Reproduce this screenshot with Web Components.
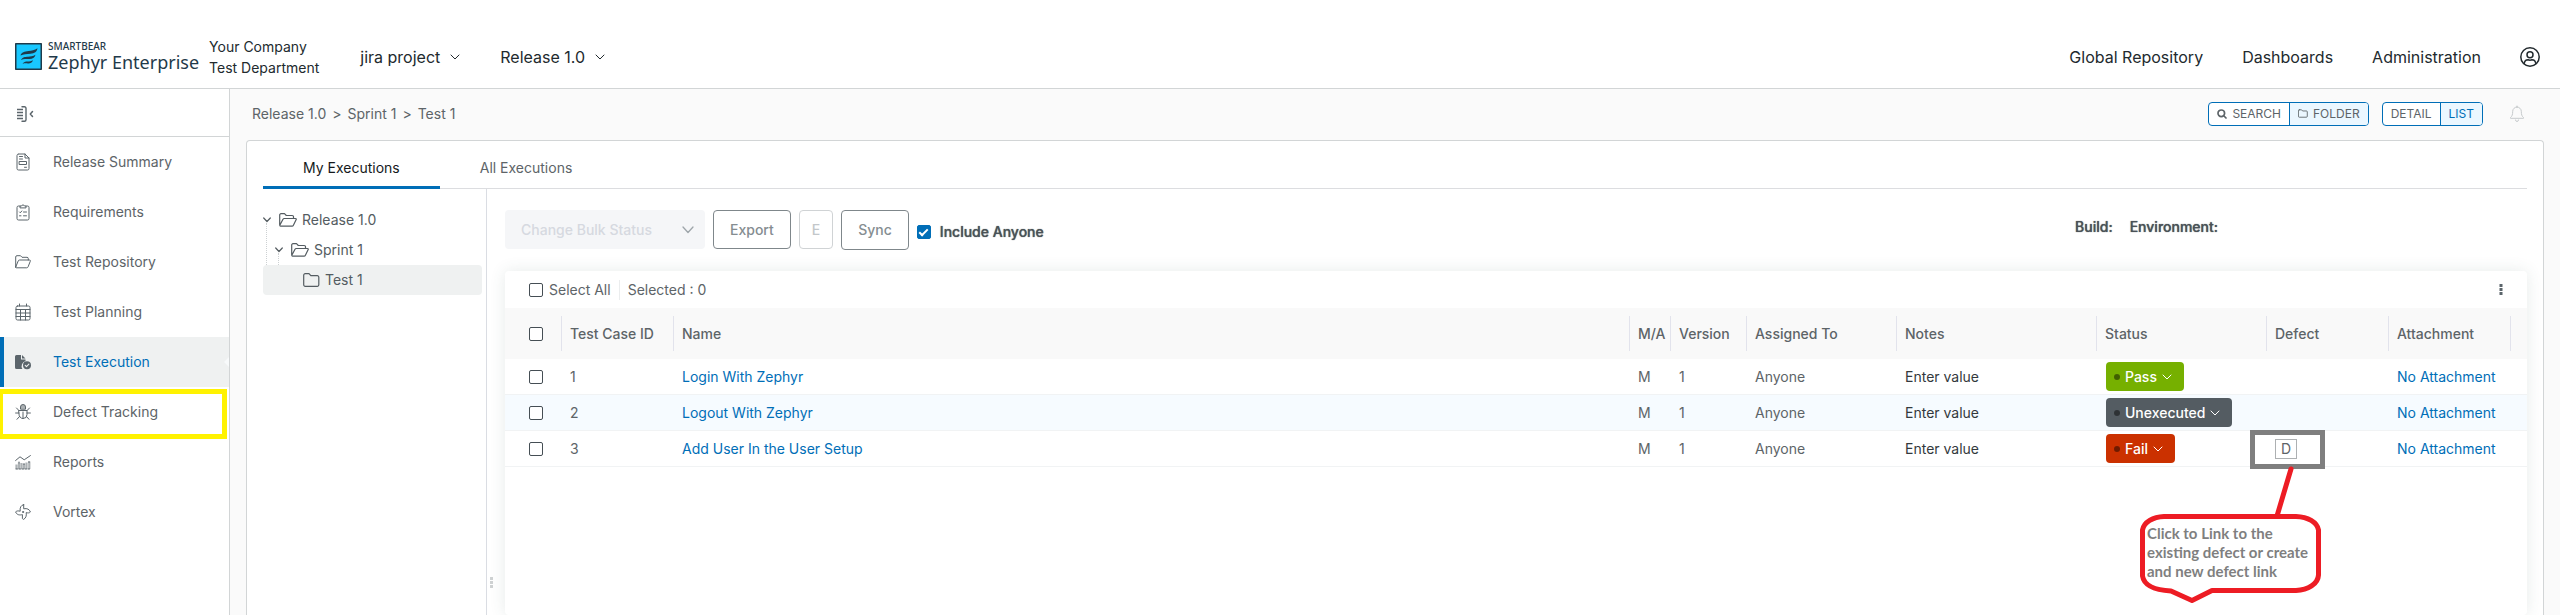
<!DOCTYPE html>
<html lang="en">
<head>
<meta charset="utf-8">
<meta name="viewport" content="width=device-width, initial-scale=1">
<title>Zephyr Enterprise – Test Execution</title>
<style>
  html, body { margin: 0; }
  body {
    font: 14px/20px Inter, "Liberation Sans", sans-serif;
    color: #5d6468;
    background: #fff;
    --blue: #006eb7;
    --line: #d2d5d6;
    --ink: #222a2e;
    --icon: #5b656b;
  }
</style>
</head>
<body>
<zephyr-app></zephyr-app>

<script>
const base = `
  *, *::before, *::after { box-sizing: border-box; }
  a { color: inherit; text-decoration: none; }
  button, select { font: inherit; color: inherit; margin: 0; cursor: pointer; }
  svg { display: block; flex: none; fill: none; stroke: currentColor; stroke-linecap: round; stroke-linejoin: round; }
  input[type=checkbox] {
    appearance: none; display: block; flex: none; width: 14px; height: 14px; margin: 0;
    border: 1px solid #454e54; border-radius: 2px; background: #fff;
  }
  input[type=checkbox]:checked { background: var(--blue); border-color: var(--blue); display: grid; place-items: center; }
  input[type=checkbox]:checked::after {
    content: ""; width: 9px; height: 5px; border: solid #fff; border-width: 0 0 2px 2px;
    transform: translateY(-1px) rotate(-45deg);
  }
`;

function define(name, html, setup) {
  const tpl = document.createElement('template');
  tpl.innerHTML = html.replace('<style>', '<style>' + base);
  customElements.define(name, class extends HTMLElement {
    connectedCallback() {
      if (this.shadowRoot) return;
      this.attachShadow({ mode: 'open' }).append(tpl.content.cloneNode(true));
      if (setup) setup(this, this.shadowRoot);
    }
  });
}

const icons = {
  summary: `<svg width="16" height="18" viewBox="0 0 16 18"><path d="M4 1h6l4 4v10.500a1.500 1.500 0 0 1-1.500 1.500h-9A1.500 1.500 0 0 1 2 15.500v-13A1.500 1.500 0 0 1 3.500 1zM10 1v4h4M4.500 3.500h3M4.500 6h3M4.500 8.500h7v3h-7zM9.500 14.300h2"/></svg>`,
  requirements: `<svg width="16" height="18" viewBox="0 0 16 18"><path d="M5 3H3.500A1.500 1.500 0 0 0 2 4.500v11A1.500 1.500 0 0 0 3.500 17h9a1.500 1.500 0 0 0 1.500-1.500v-11A1.500 1.500 0 0 0 12.500 3H11M5 4.500V3h1.500a1.600 1.600 0 0 1 3 0H11v1.500zM4.500 9l.8.8L6.800 8M8.500 9h3M4.500 12.800h1.500M8.500 12.800h3"/></svg>`,
  repository: `<svg width="16" height="14" viewBox="0 0 16 14"><path d="M.7 12V2A1.300 1.300 0 0 1 2 .7h3.500L7 2.300h5A1.300 1.300 0 0 1 13.300 3.600V5M.7 12l2.500-6A1.500 1.500 0 0 1 4.600 5h9.900a.9.900 0 0 1 .8 1.200l-2.200 5.600a1.500 1.500 0 0 1-1.400 1H1.500A.8.8 0 0 1 .7 12z"/></svg>`,
  planning: `<svg width="16" height="18" viewBox="0 0 16 18"><path d="M2.500 3h11A1.500 1.500 0 0 1 15 4.500v11a1.500 1.500 0 0 1-1.500 1.500h-11A1.500 1.500 0 0 1 1 15.500v-11A1.500 1.500 0 0 1 2.500 3zM4.500 1v2M11.500 1v2M1 6.500h14M1 10h14M1 13.500h14M5.500 6.500V17M10.500 6.500V17"/></svg>`,
  execution: `<svg width="16" height="16" viewBox="0 0 16 16" style="fill:currentColor;stroke:none"><path d="M1.500 1H6v4.500h4.500v1.600A5.300 5.300 0 0 0 7.400 15H1.500A1.500 1.500 0 0 1 0 13.500v-11A1.500 1.500 0 0 1 1.500 1zM7 1l3.500 3.500H7z"/><circle cx="12" cy="11.300" r="4"/><path d="M10.200 11.300l1.300 1.300 2.400-2.400" style="fill:none;stroke:#eff1f1;stroke-width:1.100"/></svg>`,
  defect: `<svg width="16" height="16" viewBox="0 0 16 16"><path d="M4 6.500h8v4a4 4 0 0 1-8 0zM8 8v6.500M4 9H.6M12 9h3.400M4.200 6.800L1.500 4M11.800 6.800L14.500 4M4.500 12.500L2 15.300M11.500 12.500l2.500 2.800"/><path d="M5.500 4.800V3a2.500 2.500 0 0 1 5 0v1.800z" style="fill:currentColor;fill-opacity:.5"/></svg>`,
  reports: `<svg width="16" height="15" viewBox="0 0 16 15"><path d="M.6 5.500L5 1.800l4.200 3L15.400.6"/><path d="M1.500 14V9.500M4 14V7.500M6.500 14V8M9 14V9M11.500 14V7.500M14.300 14V6.500" style="stroke-width:2.200;stroke-opacity:.5;stroke-linecap:butt"/><path d="M1 14h14M4 7v1M9 8.500v1M14 6.500v1" style="stroke-dasharray:1.500 1.500"/></svg>`,
  vortex: `<svg width="16" height="16" viewBox="0 0 16 16"><path d="M8.700.6v4.200c3.500-.8 5.800.6 6.700 3.200-1.200 1.200-2.400 1-4.200.6.500 3.200-.3 5.600-2.700 6.800l-1.100-.8v-4c-3 .8-5.600.3-6.800-2.700 1.600-1.300 2.600-1.100 4.600-.7C4.700 3.700 5.800 1.200 8.700.6z"/><circle cx="8" cy="8" r=".6"/></svg>`,
  folderOpen: `<svg width="18" height="14" viewBox="0 0 18 14"><path d="M.7 12V2A1.300 1.300 0 0 1 2 .7h3.500L7.300 2.500h5.900A1.300 1.300 0 0 1 14.500 3.800V5.500M.8 12.300L4 6.300a1.500 1.500 0 0 1 1.300-.8h11.300a.7.700 0 0 1 .6 1l-2.800 5.700a1.500 1.500 0 0 1-1.400.9H1.500A.8.8 0 0 1 .8 12.300z" stroke-width="1.200"/></svg>`,
  folder: `<svg width="17" height="14" viewBox="0 0 17 14"><path d="M2.200.7H6l1.800 2h6.500A1.500 1.500 0 0 1 15.800 4.200v7.600a1.500 1.500 0 0 1-1.500 1.500H2.200A1.500 1.500 0 0 1 .7 11.800V2.200A1.500 1.500 0 0 1 2.200.7z" stroke-width="1.200"/></svg>`,
  chevron: `<svg width="10" height="6" viewBox="0 0 10 6"><path d="M1 1l4 4 4-4"/></svg>`
};

define('zephyr-logo', `
<style>
  :host { display: flex; gap: 6px; color: #1f3a4a; }
  svg { margin-top: 2px; }
  span { display: block; font-family: "Noto Sans", "Open Sans", sans-serif; white-space: nowrap; }
  .brand { font-size: 10px; line-height: 10px; font-weight: 500; }
  .name { font-size: 18px; line-height: 22px; }
</style>
<svg width="27" height="27" viewBox="0 0 27 27"><rect x=".75" y=".75" width="25.500" height="25.500" fill="#19c8ff" stroke-width="1.500"/><g stroke="none" fill="#1f3a4a"><path d="M5.500 12.500c1-3.500 4-4 8-4.500 3-.4 6-1 9-2.800-.5 3.500-3 5-7 5.500-4 .4-7 .3-10 1.800z"/><path d="M6 17c1.500-3 4-3 7-3.200 2.500-.2 5-.6 7.500-2-.8 3-3 4-6 4.200-3 .2-6-.3-8.500 1z"/><path d="M7.500 21c1-2.300 3-2.400 5-2.500s4-.4 5.500-1.300c-.8 2.300-2.500 3-4.500 3.200-2 .1-4-.4-6 .6z"/></g></svg>
<div><span class="brand">SMARTBEAR</span><span class="name">Zephyr Enterprise</span></div>
`);

define('header-menu', `
<style>
  :host { display: block; font-size: 16px; }
  button { display: flex; align-items: center; gap: 10px; padding: 0; border: 0; background: none; white-space: nowrap; }
</style>
<button type="button" aria-haspopup="menu"><slot></slot>${icons.chevron}</button>
`);

define('app-header', `
<style>
  :host { display: flex; align-items: center; height: 89px; padding: 25px 20px 0 15px; border-bottom: 1px solid var(--line); color: var(--ink); background: #fff; }
  .company { margin: 0 41px 0 10px; line-height: 21px; white-space: nowrap; }
  .menus { display: flex; gap: 40px; }
  nav { display: flex; gap: 39px; margin-left: auto; font-size: 16px; white-space: nowrap; align-items: center; }
</style>
<zephyr-logo></zephyr-logo>
<div class="company">Your Company<br>Test Department</div>
<div class="menus"><header-menu>jira project</header-menu><header-menu>Release 1.0</header-menu></div>
<nav>
  <a href="#repository">Global Repository</a>
  <a href="#dashboards">Dashboards</a>
  <a href="#admin">Administration</a>
  <a href="#profile" aria-label="Profile"><svg width="20" height="20" viewBox="0 0 20 20" stroke-width="1.500"><circle cx="10" cy="10" r="9.200"/><circle cx="10" cy="7.800" r="3"/><path d="M4.200 16.500c.5-3 2.500-3.700 3.800-3.700.7.300 3.300.3 4 0 1.300 0 3.300.7 3.800 3.700"/></svg></a>
</nav>
`);

define('nav-item', `
<style>
  :host { display: block; position: relative; }
  a { display: flex; align-items: center; height: 50px; border-left: 4px solid transparent; padding-left: 11px; white-space: nowrap; }
  .icon { width: 16px; margin-right: 22px; color: var(--icon); display: grid; place-items: center; }
  :host([active]) a { background: #eff1f1; border-color: var(--blue); color: var(--blue); }
  :host([active]) a::after { content: ""; margin-left: auto; border: 5px solid transparent; border-right-color: #f8fafb; border-left: 0; }
  :host([marked])::after { content: ""; position: absolute; inset: 2px 2px -2px -2px; border: 5px solid #fff200; z-index: 1; pointer-events: none; }
</style>
<a><span class="icon"></span><slot></slot></a>
`, (host, root) => {
  root.querySelector('.icon').innerHTML = icons[host.getAttribute('icon')];
  root.querySelector('a').href = '#' + host.getAttribute('icon');
  if (host.hasAttribute('active')) root.querySelector('a').setAttribute('aria-current', 'page');
});

define('side-bar', `
<style>
  :host { display: block; width: 230px; flex: none; border-right: 1px solid var(--line); background: #fff; }
  .collapse { display: flex; align-items: center; width: 100%; height: 48px; padding: 3px 0 0 16px; border: 0; border-bottom: 1px solid var(--line); background: none; color: var(--icon); }
</style>
<button class="collapse" type="button" aria-label="Collapse menu"><svg width="18" height="16" viewBox="0 0 18 16"><path d="M1 3.500h6M1 6.500h6M1 9.500h6M1 12.500h6" stroke-width="1.400" stroke-linecap="butt"/><path d="M6 .8h2.500A1.500 1.500 0 0 1 10 2.300v11.400a1.500 1.500 0 0 1-1.500 1.500H6" stroke-width="1.400"/><path d="M16.500 5.500L14.300 8l2.200 2.500" stroke-width="1.500"/></svg></button>
<nav>
  <nav-item icon="summary">Release Summary</nav-item>
  <nav-item icon="requirements">Requirements</nav-item>
  <nav-item icon="repository">Test Repository</nav-item>
  <nav-item icon="planning">Test Planning</nav-item>
  <nav-item icon="execution" active>Test Execution</nav-item>
  <nav-item icon="defect" marked>Defect Tracking</nav-item>
  <nav-item icon="reports">Reports</nav-item>
  <nav-item icon="vortex">Vortex</nav-item>
</nav>
`);

define('view-bar', `
<style>
  :host { display: flex; align-items: center; height: 51px; padding: 0 18px 2px 6px; }
  .crumbs { display: flex; gap: 6px; white-space: nowrap; }
  .views { display: flex; align-items: center; margin-left: auto; }
  .group { display: flex; height: 24px; border: 1px solid var(--blue); border-radius: 4px; overflow: hidden; margin-right: 13px; background: #fff; }
  .group button { display: flex; align-items: center; gap: 5px; padding: 0 8px; border: 0; background: none; font-size: 12px; line-height: 16px; }
  .group button + button { border-left: 1px solid var(--blue); background: #ebf7ff; }
  .group .on { color: var(--blue); }
  .bell { border: 0; padding: 0; background: none; color: #c6cacc; margin: 0 18px 0 14px; }
</style>
<div class="crumbs"><a href="#r">Release 1.0</a><span>&gt;</span><a href="#s">Sprint 1</a><span>&gt;</span><a href="#t">Test 1</a></div>
<div class="views">
  <div class="group">
    <button type="button"><svg width="10" height="10" viewBox="0 0 10 10" stroke-width="1.700"><circle cx="4.300" cy="4.300" r="3.300"/><path d="M7 7l2 2"/></svg>SEARCH</button>
    <button type="button"><svg width="10" height="9" viewBox="0 0 17 14" stroke-width="1.500"><path d="M2.200.7H6l1.800 2h6.500A1.500 1.500 0 0 1 15.800 4.200v7.600a1.500 1.500 0 0 1-1.500 1.500H2.200A1.500 1.500 0 0 1 .7 11.800V2.200A1.500 1.500 0 0 1 2.200.7z"/></svg>FOLDER</button>
  </div>
  <div class="group"><button type="button">DETAIL</button><button type="button" class="on">LIST</button></div>
  <button class="bell" type="button" aria-label="Notifications"><svg width="14" height="17" viewBox="0 0 14 17"><path d="M7 1v1M7 2a4.300 4.300 0 0 1 4.300 4.300c0 3.500.7 5 2.200 6.200v.8H.5v-.8C2 11.300 2.700 9.800 2.700 6.300A4.300 4.300 0 0 1 7 2zM5.500 15a1.500 1.500 0 0 0 3 0"/></svg></button>
</div>
`);

define('tab-bar', `
<style>
  :host { display: flex; height: 48px; border-bottom: 1px solid #dcdde0; }
  button { padding: 9px 40px 0; border: 0; border-bottom: 3px solid transparent; background: none; margin-bottom: -1px; white-space: nowrap; }
  [aria-selected=true] { color: #15191c; border-color: var(--blue); }
</style>
<button type="button" role="tab" aria-selected="true">My Executions</button>
<button type="button" role="tab" aria-selected="false">All Executions</button>
`);

define('tree-node', `
<style>
  :host { display: block; position: relative; }
  .row { display: flex; align-items: center; height: 30px; border-radius: 4px; white-space: nowrap; color: #545c61; }
  .toggle { width: 16px; display: flex; }
  .icon { margin-right: 5px; }
  :host([open]) .children { padding-left: 12px; }
  :host([open])::before { content: ""; position: absolute; left: 3px; top: 18px; bottom: 30px; border-left: 1px dotted #cdd1d3; }
  :host([selected]) .row { background: #eff1f1; margin-left: -24px; padding-left: 24px; }
</style>
<div class="row"><span class="toggle"></span><span class="icon"></span><slot name="label"></slot></div>
<div class="children"><slot></slot></div>
`, (host, root) => {
  const open = host.hasAttribute('open');
  root.querySelector('.toggle').innerHTML = open ? `<svg width="8" height="6" viewBox="0 0 8 6" stroke-width="1.200"><path d="M.7 1L4 4.500 7.300 1"/></svg>` : '';
  root.querySelector('.icon').innerHTML = open ? icons.folderOpen : icons.folder;
});

define('status-button', `
<style>
  :host { display: block; }
  button { display: flex; align-items: center; height: 29px; padding: 0 12px 0 8px; border: 0; border-radius: 4px; color: #fff; font-weight: 500; background: var(--status); }
  button::before { content: ""; width: 6px; height: 6px; border-radius: 50%; background: rgb(0 0 0 / .45); margin-right: 5px; }
  svg { margin-left: 5px; }
</style>
<button type="button" aria-haspopup="menu"><slot></slot>${icons.chevron}</button>
`);

define('defect-callout', `
<style>
  :host { display: block; position: absolute; left: -25px; top: -1px; width: 75px; height: 39px; border: 5px solid #7f7f7f; pointer-events: none; z-index: 2; }
  svg { position: absolute; left: -115px; top: 31px; overflow: visible; stroke: #ed1c24; stroke-width: 5px; }
  p { position: absolute; left: -108px; top: 89px; margin: 0; font: 700 15px/19px Lato, sans-serif; color: #7f7f7f; white-space: nowrap; transform: none; }
</style>
<svg width="181" height="140" viewBox="0 0 181 140"><path d="M151 3L137 50M24 50.500H156C168 51 177 56 178.500 64V109C178 118 168 124 156 124.500H72L52 134.500 31 125C14 124 4 120 2.500 110V64C4 56 13 51 24 50.500z"/></svg>
<p><slot></slot></p>
`);

define('execution-table', `
<style>
  :host { display: block; flex: 1; border-radius: 4px; box-shadow: 0 0 16px rgb(60 90 85 / .12); background: #fff; }
  .bar { display: flex; align-items: center; height: 37px; padding: 0 24px; }
  label { display: flex; align-items: center; gap: 6px; white-space: nowrap; }
  .count { margin-left: 8px; padding-left: 8px; border-left: 1px solid #ebedee; white-space: nowrap; }
  .more { margin-left: auto; padding: 0; border: 0; background: none; color: var(--icon); }
  .more svg { stroke: none; fill: currentColor; }
  table { width: 100%; table-layout: fixed; border-collapse: separate; border-spacing: 0; }
  th { height: 51px; padding: 0; text-align: left; font-weight: 500; background: #f9f9f9; white-space: nowrap; }
  th > span { display: flex; align-items: center; height: 35px; padding: 0 0 0 8px; border-right: 1px solid #e2e3ec; }
  th:last-child > span { border: 0; }
  td { height: 36px; padding: 0 0 0 8px; border-bottom: 1px solid #f1f3f4; white-space: nowrap; }
  tbody tr:nth-child(2) td { background: #f6fbff; }
  th:first-child > span, td:first-child { padding-left: 24px; }
  a { color: var(--blue); }
  .note { color: #33393d; }
  .cell { position: relative; padding-left: 1px; }
  .link { display: block; width: 22px; height: 20px; padding: 0; border: 1px solid #adb0b2; background: #fff; line-height: 18px; }
  .defect { position: relative; height: 35px; padding: 8px 0 0; }
</style>
<div class="bar">
  <label><input type="checkbox">Select All</label>
  <span class="count">Selected : 0</span>
  <button class="more" type="button" aria-label="More"><svg width="4" height="11" viewBox="0 0 4 11"><path d="M.5 0h3v3h-3zM.5 4h3v3h-3zM.5 8h3v3h-3z"/></svg></button>
</div>
<table>
  <colgroup><col style="width:57px"><col style="width:112px"><col><col style="width:41px"><col style="width:76px"><col style="width:150px"><col style="width:200px"><col style="width:170px"><col style="width:122px"><col style="width:122px"><col style="width:16px"></colgroup>
  <thead><tr>
    <th><span><input type="checkbox" aria-label="Select all rows"></span></th>
    <th><span>Test Case ID</span></th><th><span>Name</span></th><th><span>M/A</span></th><th><span>Version</span></th><th><span>Assigned To</span></th><th><span>Notes</span></th><th><span>Status</span></th><th><span>Defect</span></th><th><span>Attachment</span></th><th><span></span></th>
  </tr></thead>
  <tbody></tbody>
</table>
`, (host, root) => {
  const rows = [
    [1, 'Login With Zephyr', 'Pass', '#76b000'],
    [2, 'Logout With Zephyr', 'Unexecuted', '#545c62'],
    [3, 'Add User In the User Setup', 'Fail', '#cb3100']
  ];
  root.querySelector('tbody').innerHTML = rows.map(([id, name, status, color]) => `
    <tr><td><input type="checkbox" aria-label="Select ${name}"></td><td>${id}</td>
    <td><a href="#case-${id}">${name}</a></td><td>M</td><td>1</td><td>Anyone</td>
    <td><span class="note">Enter value</span></td>
    <td><div class="cell"><status-button style="--status:${color}">${status}</status-button></div></td>
    <td>${id === 3 ? `<div class="defect"><button class="link" type="button">D</button><defect-callout>Click to Link to the<br>existing defect or create<br>and new defect link</defect-callout></div>` : ''}</td>
    <td><a href="#attachment-${id}">No Attachment</a></td><td></td></tr>`).join('');
});

define('tool-bar', `
<style>
  :host { display: flex; align-items: flex-start; gap: 8px; height: 40px; font-weight: 500; }
  .bulk { display: grid; align-items: center; width: 200px; height: 39px; color: #9ea5aa; }
  .bulk > * { grid-area: 1 / 1; }
  select { appearance: none; width: 100%; height: 100%; padding: 0 16px; border: 0; border-radius: 4px; background: #f5f6f8; color: #d6d9e0; opacity: 1; font-weight: 500; }
  .bulk svg { justify-self: end; margin-right: 11px; pointer-events: none; }
  button { height: 39px; padding: 0 16px; border: 1px solid #7f878b; border-radius: 4px; background: #fff; color: #858d91; }
  button:disabled { padding: 0 12px; border-color: #d0d3d5; color: #c3c7ca; }
  .tall { height: 40px; }
  label, .meta { color: #4a5257; text-shadow: 0 0 1px currentColor; white-space: nowrap; }
  label { display: flex; align-items: center; gap: 9px; height: 44px; }
  .meta { display: flex; gap: 17px; margin-left: auto; margin-right: 309px; padding-top: 7px; }
</style>
<div class="bulk"><select disabled aria-label="Change bulk status"><option>Change Bulk Status</option></select><svg width="12" height="8" viewBox="0 0 12 8" stroke-width="1.300"><path d="M1 1l5 5.500L11 1"/></svg></div>
<button type="button">Export</button>
<button type="button" disabled>E</button>
<button type="button" class="tall">Sync</button>
<label><input type="checkbox" checked>Include Anyone</label>
<div class="meta"><span>Build:</span><span>Environment:</span></div>
`);

define('execution-panel', `
<style>
  :host { display: flex; flex-direction: column; flex: 1; margin: 0 16px 0 16px; padding: 0 16px; border: 1px solid var(--line); border-bottom: 0; border-radius: 4px 4px 0 0; background: #fff; }
  .body { display: flex; flex: 1; }
  aside { width: 224px; flex: none; padding: 16px 4px 0 0; border-right: 1px solid #dadde3; }
  .grip { width: 18px; flex: none; padding: 388px 0 0 3px; }
  .grip svg { stroke: none; fill: #cfd2d3; }
  main { flex: 1; min-width: 0; display: flex; flex-direction: column; gap: 21px; padding-top: 21px; }
</style>
<tab-bar role="tablist"></tab-bar>
<div class="body">
  <aside>
    <tree-node open><span slot="label">Release 1.0</span>
      <tree-node open><span slot="label">Sprint 1</span>
        <tree-node selected><span slot="label">Test 1</span></tree-node>
      </tree-node>
    </tree-node>
  </aside>
  <div class="grip"><svg width="3" height="11" viewBox="0 0 3 11"><path d="M0 0h3v3H0zM0 4h3v3H0zM0 8h3v3H0z"/></svg></div>
  <main><tool-bar></tool-bar><execution-table></execution-table></main>
</div>
`);

define('zephyr-app', `
<style>
  :host { display: flex; flex-direction: column; min-height: 100vh; }
  .page { display: flex; flex: 1; }
  .content { display: flex; flex-direction: column; flex: 1; min-width: 0; background: #fafafa; }
  view-bar { margin-left: 16px; }
</style>
<app-header></app-header>
<div class="page"><side-bar></side-bar><div class="content"><view-bar></view-bar><execution-panel></execution-panel></div></div>
`);
</script>
</body>
</html>
